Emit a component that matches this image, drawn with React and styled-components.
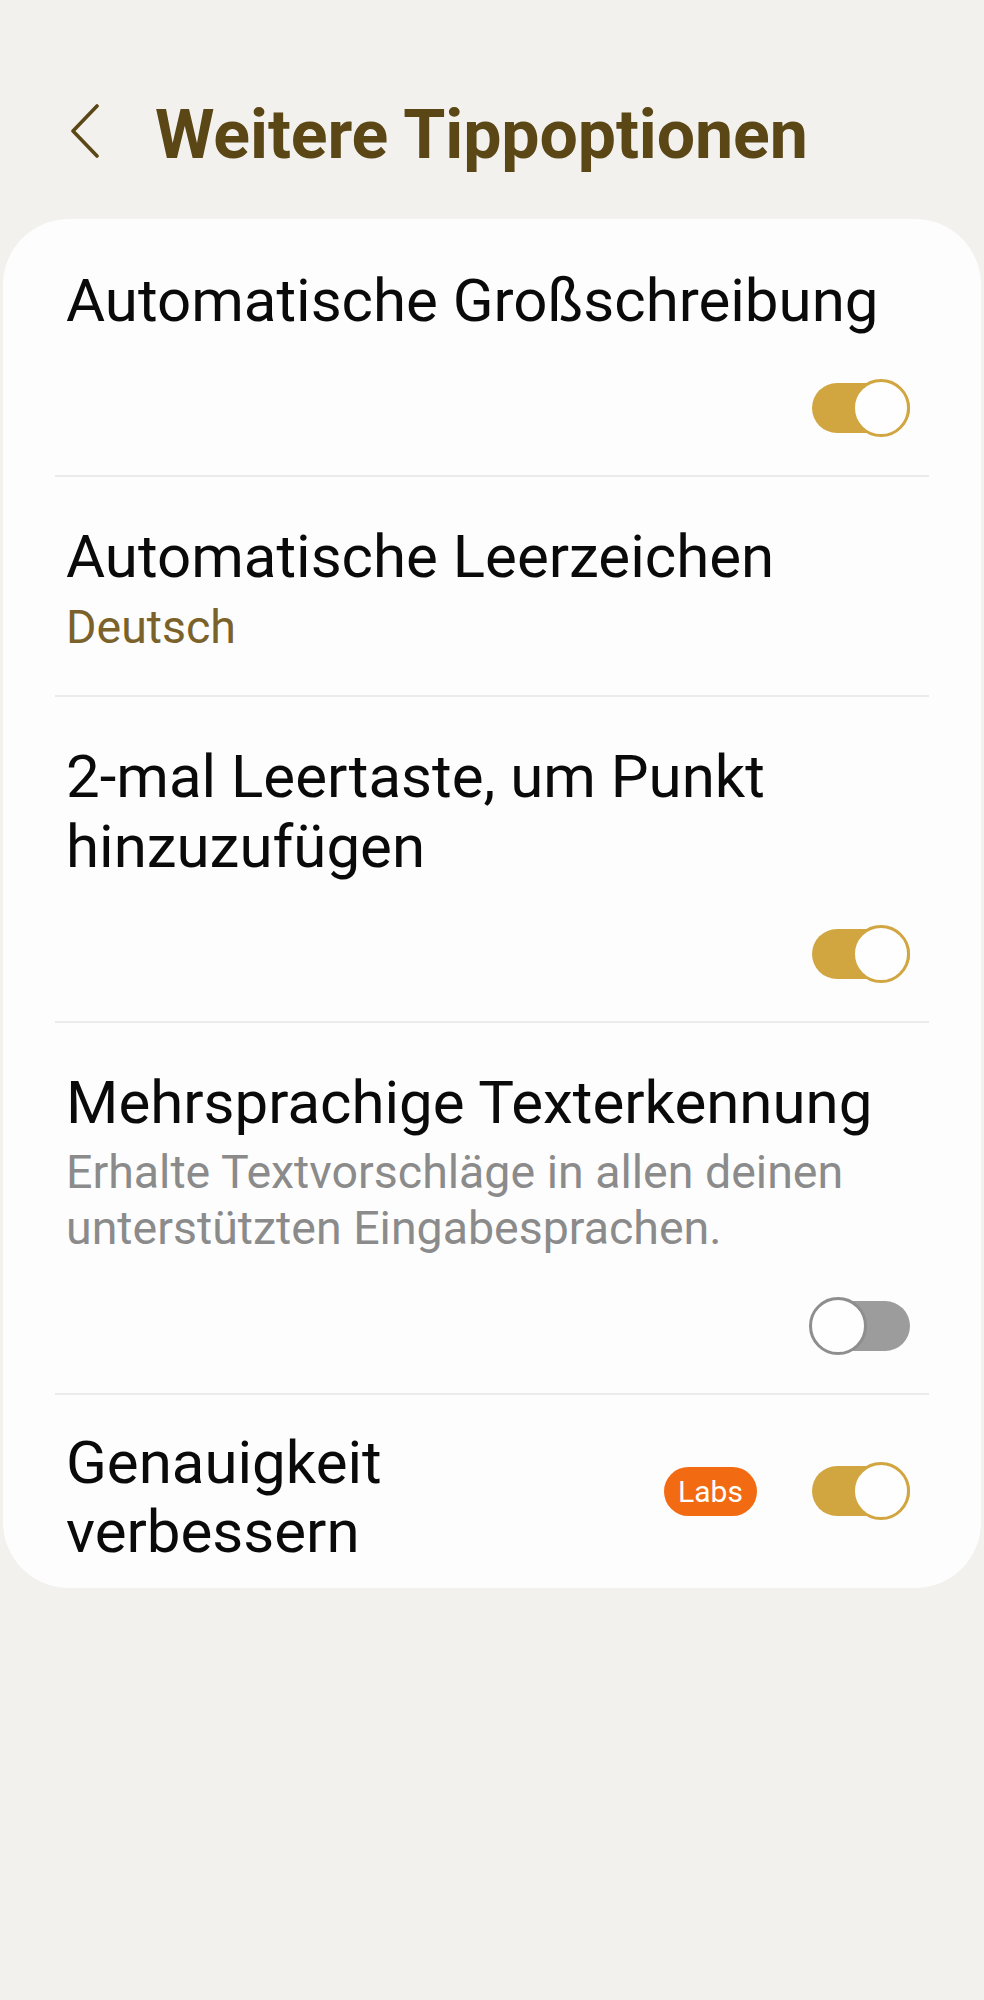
import React from 'react';
import styled, { createGlobalStyle } from 'styled-components';

const GlobalStyle = createGlobalStyle`
  body {
    margin: 0;
    background: #f2f1ed;
    font-family: Roboto, 'Noto Sans', 'Liberation Sans', sans-serif;
  }
`;

const Page = styled.div`
  min-height: 2000px;
  background: #f2f1ed;
`;

const Header = styled.header`
  display: flex;
  align-items: center;
  padding: 95px 0 0 70px;
  height: 80px;
`;

const BackIcon = styled.svg`
  width: 30px;
  height: 54px;
  margin: 0 55px 8px 0;
  flex-shrink: 0;
`;

const Title = styled.h1`
  margin: 0;
  font-size: 68px;
  line-height: 80px;
  font-weight: 700;
  color: #5b4616;
  letter-spacing: -0.1px;
`;

const Card = styled.section`
  margin: 44px 3px 0;
  padding: 0 52px;
  background: #fdfdfd;
  border-radius: 66px;
`;

const Row = styled.div`
  display: flex;
  flex-direction: column;
  padding: 45px 19px ${(p) => (p.$hasToggle ? '38px' : '40px')} 11px;
  border-top: 2px solid #ebebea;

  &:first-child {
    border-top: none;
    padding-top: 47px;
  }
`;

const InlineRow = styled.div`
  display: flex;
  align-items: center;
  padding: 33px 19px 22px 11px;
  border-top: 2px solid #ebebea;
`;

const TextBlock = styled.div`
  flex: 1;
  min-width: 0;
`;

const Label = styled.div`
  font-size: 60px;
  line-height: ${(p) => p.$lh || 70}px;
  color: #0a0a0a;
`;

const Summary = styled.div`
  margin-top: ${(p) => p.$gap}px;
  font-size: 46.5px;
  line-height: 56px;
  color: ${(p) => (p.$accent ? '#7a622a' : '#8b8b8b')};
`;

const ToggleLine = styled.div`
  display: flex;
  justify-content: flex-end;
  margin-top: ${(p) => p.$gap}px;
`;

const Controls = styled.div`
  display: flex;
  align-items: center;
  gap: 52px;
  margin-bottom: 12px;
`;

const Badge = styled.span`
  display: inline-flex;
  align-items: center;
  justify-content: center;
  width: 93px;
  height: 49px;
  border-radius: 25px;
  background: #f26b12;
  color: #fff;
  font-size: 30px;
`;

const Switch = styled.div`
  position: relative;
  width: 101px;
  height: 58px;
  flex-shrink: 0;
`;

const Track = styled.div`
  position: absolute;
  left: 3px;
  right: 0;
  top: 4px;
  height: 50px;
  border-radius: 25px;
  background: ${(p) => (p.$on ? '#d1a641' : '#9c9c9c')};
`;

const Knob = styled.div`
  position: absolute;
  top: 0;
  ${(p) => (p.$on ? 'right: 0;' : 'left: 0;')}
  width: 58px;
  height: 58px;
  box-sizing: border-box;
  border-radius: 50%;
  background: #fefefe;
  border: 3px solid ${(p) => (p.$on ? '#d1a641' : '#8e8e8e')};
`;

const Toggle = ({ on }) => (
  <Switch>
    <Track $on={on} />
    <Knob $on={on} />
  </Switch>
);

export default function App() {
  return (
    <Page>
      <GlobalStyle />
      <Header>
        <BackIcon viewBox="0 0 30 54">
          <path
            d="M27 2 L3 27 L27 52"
            fill="none"
            stroke="#5b4616"
            strokeWidth="3.6"
            strokeLinecap="round"
            strokeLinejoin="round"
          />
        </BackIcon>
        <Title>Weitere Tippoptionen</Title>
      </Header>
      <Card>
        <Row $hasToggle>
          <Label>Automatische Großschreibung</Label>
          <ToggleLine $gap={43}>
            <Toggle on />
          </ToggleLine>
        </Row>
        <Row>
          <Label>Automatische Leerzeichen</Label>
          <Summary $accent $gap={7}>
            Deutsch
          </Summary>
        </Row>
        <Row $hasToggle>
          <Label>2-mal Leertaste, um Punkt hinzuzufügen</Label>
          <ToggleLine $gap={43}>
            <Toggle on />
          </ToggleLine>
        </Row>
        <Row $hasToggle>
          <Label>Mehrsprachige Texterkennung</Label>
          <Summary $gap={6}>
            Erhalte Textvorschläge in allen deinen unterstützten Eingabesprachen.
          </Summary>
          <ToggleLine $gap={41}>
            <Toggle on={false} />
          </ToggleLine>
        </Row>
        <InlineRow>
          <TextBlock>
            <Label $lh={69}>Genauigkeit verbessern</Label>
          </TextBlock>
          <Controls>
            <Badge>Labs</Badge>
            <Toggle on />
          </Controls>
        </InlineRow>
      </Card>
    </Page>
  );
}
